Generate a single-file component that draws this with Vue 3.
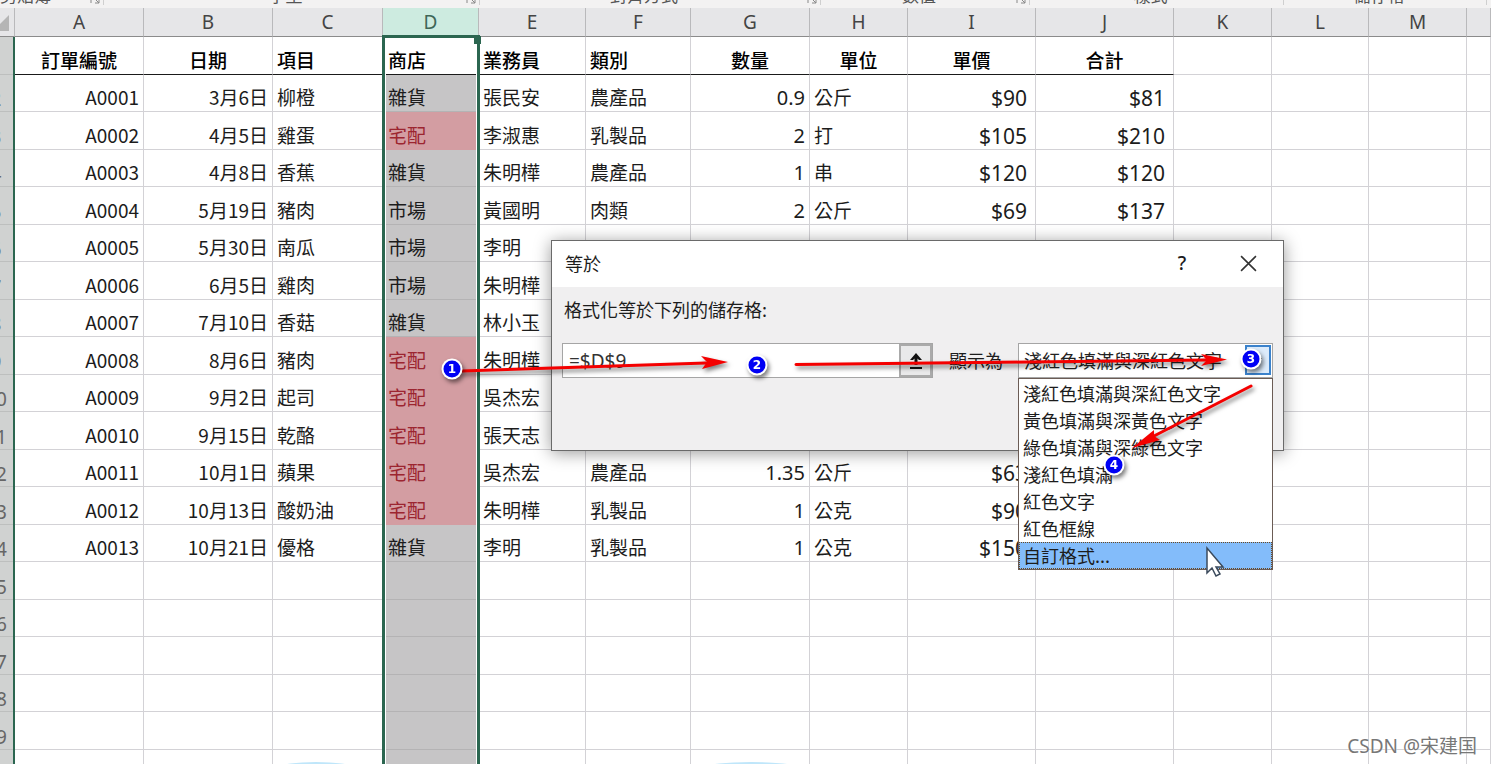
<script setup>
import { ref } from 'vue'

const groups = ['剪貼簿', '字型', '對齊方式', '數值', '樣式', '儲存格', '']
const columns = ['A', 'B', 'C', 'D', 'E', 'F', 'G', 'H', 'I', 'J', 'K', 'L', 'M', '']
const headings = ['訂單編號', '日期', '項目', '商店', '業務員', '類別', '數量', '單位', '單價', '合計']

const orders = [
  ['A0001', '3月6日', '柳橙', '雜貨', '張民安', '農產品', '0.9', '公斤', '$90', '$81'],
  ['A0002', '4月5日', '雞蛋', '宅配', '李淑惠', '乳製品', '2', '打', '$105', '$210'],
  ['A0003', '4月8日', '香蕉', '雜貨', '朱明樺', '農產品', '1', '串', '$120', '$120'],
  ['A0004', '5月19日', '豬肉', '市場', '黃國明', '肉類', '2', '公斤', '$69', '$137'],
  ['A0005', '5月30日', '南瓜', '市場', '李明'],
  ['A0006', '6月5日', '雞肉', '市場', '朱明樺'],
  ['A0007', '7月10日', '香菇', '雜貨', '林小玉'],
  ['A0008', '8月6日', '豬肉', '宅配', '朱明樺'],
  ['A0009', '9月2日', '起司', '宅配', '吳杰宏'],
  ['A0010', '9月15日', '乾酪', '宅配', '張天志'],
  ['A0011', '10月1日', '蘋果', '宅配', '吳杰宏', '農產品', '1.35', '公斤', '$63'],
  ['A0012', '10月13日', '酸奶油', '宅配', '朱明樺', '乳製品', '1', '公克', '$90'],
  ['A0013', '10月21日', '優格', '雜貨', '李明', '乳製品', '1', '公克', '$150'],
  [], [], [], [], [], []
]

const formula = ref('=$D$9')
const formats = ['淺紅色填滿與深紅色文字', '黃色填滿與深黃色文字', '綠色填滿與深綠色文字', '淺紅色填滿', '紅色文字', '紅色框線', '自訂格式...']
const chosen = ref(formats[0])
const hovered = ref(6)

const badges = [
  { n: 1, x: 452, y: 369 },
  { n: 2, x: 757, y: 365 },
  { n: 3, x: 1251, y: 359 },
  { n: 4, x: 1114, y: 465 }
]
</script>

<template>
  <main class="app">
    <div class="ribbon">
      <div v-for="(g, i) in groups" :key="i" class="group">
        <span>{{ g }}</span>
        <svg v-if="[0, 1, 2, 3].includes(i)" class="launcher" viewBox="0 0 10 10"><path d="M1 9V1h8M4 4l5 5M9 5v4H5" /></svg>
      </div>
    </div>

    <div class="sheet">
      <table>
        <colgroup>
          <col class="w-row"><col class="w-a"><col class="w-a"><col class="w-c"><col class="w-d"><col class="w-e"><col class="w-f"><col class="w-g"><col class="w-h"><col class="w-i"><col class="w-j"><col class="w-h"><col class="w-l"><col class="w-h"><col>
        </colgroup>
        <thead>
          <tr>
            <th class="corner"><svg viewBox="0 0 15 28"><path d="M9 7V23H-7z" /></svg></th>
            <th v-for="(c, i) in columns" :key="i" scope="col" :class="{ picked: c === 'D' }">{{ c }}</th>
          </tr>
        </thead>
        <tbody>
          <tr class="titles">
            <th scope="row" class="num"><span>1</span></th>
            <td v-for="(c, i) in columns" :key="i" :class="['t' + i, { ruled: i < 10 }]">{{ headings[i] }}</td>
          </tr>
          <tr v-for="(row, r) in orders" :key="r">
            <th scope="row" class="num"><span>{{ r + 2 }}</span></th>
            <td v-for="(c, i) in columns" :key="i" :class="['c' + i, { hit: i === 3 && row[3] === '宅配' }]">{{ row[i] }}</td>
          </tr>
        </tbody>
      </table>
      <div class="selection"><i></i></div>
      <div class="edge"></div>
    </div>

    <section class="dialog" role="dialog" aria-labelledby="dlg-title">
      <header>
        <h1 id="dlg-title">等於</h1>
        <button type="button" class="help" aria-label="說明">?</button>
        <button type="button" class="close" aria-label="關閉">
          <svg viewBox="0 0 16 16"><path d="M1 1 15 15M15 1 1 15" /></svg>
        </button>
      </header>
      <div class="body">
        <label for="cell-ref" class="prompt">格式化等於下列的儲存格:</label>
        <div class="fields">
          <div class="ref-box">
            <input id="cell-ref" v-model="formula" type="text">
            <button type="button" aria-label="摺疊對話方塊">
              <svg viewBox="0 0 16 18"><path class="head" d="M8 1 14 8H11L9.500 6.500V13H6.500V6.500L5 8H2z" /><path class="base" d="M2 16H14" /></svg>
            </button>
          </div>
          <label for="fmt" class="as">顯示為</label>
          <div class="combo">
            <select id="fmt" v-model="chosen">
              <option v-for="f in formats" :key="f">{{ f }}</option>
            </select>
            <span class="drop"><svg viewBox="0 0 10 6"><path d="M1 1 5 5 9 1" /></svg></span>
            <ul role="listbox" aria-label="顯示為">
              <li v-for="(f, i) in formats" :key="f" role="option" :aria-selected="i === hovered" :class="{ hot: i === hovered }" @mouseenter="hovered = i" @click="chosen = f">{{ f }}</li>
            </ul>
          </div>
        </div>
      </div>
    </section>

    <svg class="marks" width="1491" height="764" viewBox="0 0 1491 764" aria-hidden="true">
      <g class="arrows">
        <path class="shaft" d="M462 371 706 363M796 364.500 1206 360M1251 386 1154 436" />
        <path class="tip" d="M728 362 701 356 707 362 702 369zM1227 359.500 1201 354 1207 360 1201 366zM1132 448 1154 430 1154 436 1160 440z" />
      </g>
      <g v-for="b in badges" :key="b.n" class="badge">
        <circle class="rim" :cx="b.x" :cy="b.y" r="10.500" />
        <circle class="disc" :cx="b.x" :cy="b.y" r="8.500" />
        <text :x="b.x" :y="b.y + 4">{{ b.n }}</text>
      </g>
      <path class="pointer" d="M1207 548V573L1212 568 1216 576 1220 574 1216 567H1223z" />
    </svg>

    <i class="glow one"></i>
    <i class="glow two"></i>
    <p class="watermark">CSDN @宋建国</p>
  </main>
</template>

<style>
body { margin: 0; }
</style>

<style scoped>
.app {
  position: relative;
  height: 100vh;
  overflow: hidden;
  background: #fff;
  color: #1c1c1c;
  font-family: "Noto Sans CJK TC", sans-serif;
}
.ribbon {
  display: grid;
  grid-template-columns: 104px 376px 341px 209px 254px 203px 1fr;
  height: 8px;
  overflow: hidden;
  background: #f3f2f2;
}
.group {
  position: relative;
  display: flex;
  align-items: flex-end;
  justify-content: center;
  height: 5px;
  padding-right: 12px;
  border-right: 1px solid #cfcfcf;
  color: #555;
  font-size: 17px;
  line-height: 20px;
}
.group:first-child { justify-content: flex-start; }
.group:last-child { border: 0; }
.launcher {
  position: absolute;
  right: 3px;
  bottom: 1px;
  width: 10px;
  fill: none;
  stroke: #888;
}
.sheet { position: relative; }
table {
  width: 100%;
  table-layout: fixed;
  border-collapse: separate;
  border-spacing: 0;
}
.w-row { width: 15px; }
.w-a { width: 129px; }
.w-c { width: 110px; }
.w-d { width: 96px; }
.w-e { width: 107px; }
.w-f { width: 105px; }
.w-g { width: 119px; }
.w-h { width: 98px; }
.w-i { width: 128px; }
.w-j { width: 138px; }
.w-l { width: 97px; }
th, td { box-sizing: border-box; padding: 0; }
thead th {
  height: 29px;
  border-right: 1px solid #b9b9bb;
  border-bottom: 1px solid #8b8b8b;
  background: #e6e6e8;
  color: #444;
  font: 400 19px/27px "Noto Sans", sans-serif;
}
thead th.picked { background: #cdebe0; color: #3f6657; }
.corner svg { display: block; width: 15px; height: 28px; fill: #b5b5b5; }
tbody tr { height: 37px; }
tbody tr:nth-child(odd) { height: 38px; }
td {
  padding: 0 4px 2px;
  border-right: 1px solid #d3d2d6;
  border-bottom: 1px solid #d3d2d6;
  font-size: 19px;
  line-height: 24px;
  vertical-align: bottom;
  white-space: nowrap;
}
.titles td { font-weight: 500; text-align: center; color: #000; }
.titles .t2, .titles .t3, .titles .t4, .titles .t5 { text-align: left; }
td.ruled { border-bottom-color: #1a1a1a; }
.c0, .c1, .c6, .c8, .c9 { text-align: right; }
.c6, .c8, .c9 { padding-bottom: 1px; font-family: "Noto Sans", sans-serif; font-size: 20px; }
.c8, .c9 { padding-right: 8px; font-size: 21px; }
td.c3, .titles .t3 { padding-left: 5px; }
.c3 { background: #c6c5c6; border-bottom-color: #b4b3b4; }
.c3.hit { background: #d39da2; border-bottom-color: #d39da2; color: #9c2530; }
.num {
  border-bottom: 1px solid #bdbfbe;
  background: #d0d2d1;
  color: #666;
  font: 400 19px/24px "Noto Sans", sans-serif;
  vertical-align: bottom;
}
.num span { display: block; width: 38px; margin-left: -23px; }
.selection {
  position: absolute;
  top: 27px;
  bottom: -9px;
  left: 382px;
  width: 98px;
  box-sizing: border-box;
  border: 3px solid #2b6650;
  box-shadow: inset 0 0 0 1px #fff;
}
.selection i {
  position: absolute;
  top: -2px;
  right: -4px;
  width: 7px;
  height: 8px;
  background: #2b6650;
}
.edge {
  position: absolute;
  top: 29px;
  bottom: -9px;
  left: 13px;
  width: 2px;
  background: #2b6650;
}
.dialog {
  position: absolute;
  top: 240px;
  left: 551px;
  width: 733px;
  box-sizing: border-box;
  border: 1px solid #6a6a6a;
  background: #f0eff0;
  box-shadow: 0 2px 16px rgba(0, 0, 0, 0.4);
  font-size: 18px;
}
.dialog header {
  display: flex;
  align-items: center;
  height: 44px;
  padding: 0 26px 2px 13px;
  background: #fff;
}
h1 { flex: 1; margin: 0; font-size: 18px; font-weight: 400; line-height: 26px; }
button { padding: 0; border: 0; background: none; color: inherit; font: inherit; }
.help { width: 20px; margin-right: 48px; font: 500 19px/26px "Noto Sans", sans-serif; }
.close svg { display: block; width: 17px; height: 17px; fill: none; stroke: #333; stroke-width: 1.500; }
.body { height: 138px; padding: 9px 10px 16px; }
.body label { display: block; line-height: 26px; }
.body .prompt { padding-left: 2px; }
.fields { display: flex; align-items: flex-start; margin-top: 21px; }
.ref-box {
  display: flex;
  width: 371px;
  height: 35px;
  box-sizing: border-box;
  border: 1px solid #a5a5a5;
  background: #fff;
}
.ref-box input {
  flex: 1;
  min-width: 0;
  padding: 0 6px;
  border: 0;
  outline: 0;
  background: none;
  color: #333;
  font: 19px "Noto Sans", sans-serif;
}
.ref-box button {
  width: 33px;
  border: 2px solid #aaa;
  background: #e9e9ea;
}
.ref-box svg { display: block; width: 16px; height: 18px; margin: auto; }
.head { fill: #111; }
.base { stroke: #111; stroke-width: 2; }
.body .as { margin: 4px 15px 0 16px; width: 54px; }
.combo { position: relative; flex: 1; }
select {
  display: block;
  width: 100%;
  height: 35px;
  padding: 0 5px 2px;
  border: 1px solid #a5a5a5;
  border-radius: 0;
  appearance: none;
  background: #fff;
  color: #222;
  font: 18px "Noto Sans CJK TC", sans-serif;
}
.drop {
  position: absolute;
  top: 2px;
  right: 2px;
  display: flex;
  align-items: center;
  justify-content: center;
  width: 26px;
  height: 30px;
  box-sizing: border-box;
  border: 2px solid #3b82cc;
  background: #dcebfb;
}
.drop svg { width: 10px; fill: none; stroke: #444; }
ul {
  position: absolute;
  top: 35px;
  left: 0;
  right: 0;
  margin: 0;
  padding: 1px 0 0;
  border: 1px solid #6b5c55;
  background: #fff;
  list-style: none;
}
li { padding: 0 4px; line-height: 27px; white-space: nowrap; }
li.hot { height: 25px; padding: 0 3px; border: 1px dotted #6b4a22; background: #83bcfa; line-height: 25px; }
.marks { position: absolute; top: 0; left: 0; pointer-events: none; }
.arrows, .badge { filter: drop-shadow(2px 3px 2px rgba(0, 0, 0, 0.5)); }
.shaft { fill: none; stroke: #f40000; stroke-width: 3; stroke-linecap: round; }
.tip { fill: #f40000; }
.rim { fill: #fff; }
.disc { fill: #0000f5; }
.badge text { fill: #fff; font: bold 12px "DejaVu Sans", sans-serif; text-anchor: middle; }
.pointer { fill: #fff; stroke: #3b4a5c; stroke-width: 1.500; }
.glow { position: absolute; bottom: -8px; height: 10px; border-radius: 50%; background: #bfe6fa; }
.one { left: 280px; width: 72px; }
.two { left: 706px; width: 90px; }
.watermark {
  position: absolute;
  right: 14px;
  bottom: 4px;
  margin: 0;
  color: #777;
  font: 19px/28px "Noto Sans", "Noto Sans CJK SC", sans-serif;
  text-shadow: 0 0 2px #fff;
}
</style>
